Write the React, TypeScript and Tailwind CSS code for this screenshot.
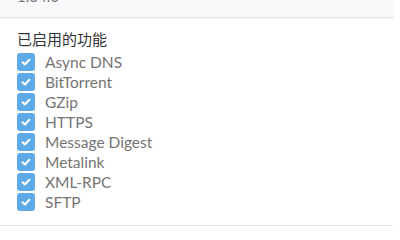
import React from "react";

const features = [
  "Async DNS",
  "BitTorrent",
  "GZip",
  "HTTPS",
  "Message Digest",
  "Metalink",
  "XML-RPC",
  "SFTP",
];

function CheckBox() {
  return (
    <span className="flex h-[18px] w-[18px] shrink-0 items-center justify-center rounded-[3px] bg-[#5eaae8]">
      <svg width="12" height="12" viewBox="0 0 12 12" fill="none">
        <path d="M2.6 6.2l2.3 2.3 4.5-4.7" stroke="#fff" strokeWidth="2" strokeLinecap="round" strokeLinejoin="round" />
      </svg>
    </span>
  );
}

export default function App() {
  return (
    <div className="h-[230px] w-[400px] overflow-hidden bg-white" style={{ fontFamily: '"Lato", "Noto Sans CJK SC", sans-serif' }}>
      <div className="w-[393px]">
        {/* version strip, mostly scrolled out of view */}
        <div className="h-[18px] overflow-hidden border-b border-[#e3e1e6] bg-[#f9f8fa] px-[17px] shadow-[0_1px_2px_rgba(0,0,0,0.06)]">
          <div className="mt-[-14px] text-[15px] leading-[20px] text-[#777]">1.34.0</div>
        </div>
        <div className="h-[208px] border-b border-[#e3e1e6] px-[17px] pt-[11px]">
          <h3 className="text-[15px] leading-[20px] text-[#333]" style={{ fontFamily: '"Noto Sans CJK SC", sans-serif' }}>
            已启用的功能
          </h3>
          <ul className="mt-[4px] flex flex-col gap-[2px]">
            {features.map((f) => (
              <li key={f} className="flex h-[18px] items-center gap-[10px]">
                <CheckBox />
                <span className="text-[15.5px] leading-[18px] text-[#747474]">{f}</span>
              </li>
            ))}
          </ul>
        </div>
      </div>
    </div>
  );
}
